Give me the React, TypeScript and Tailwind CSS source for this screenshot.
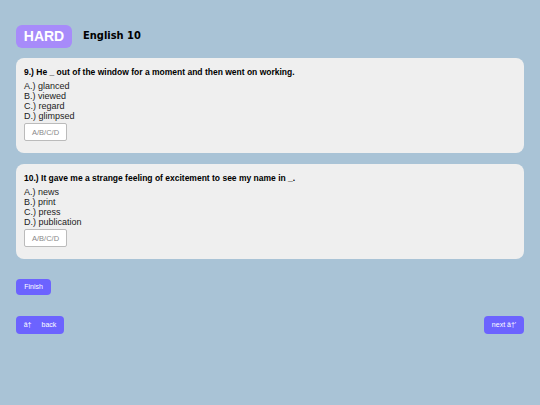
import React from "react"

const questions = [
  {
    num: 9,
    text: "He _ out of the window for a moment and then went on working.",
    options: ["glanced", "viewed", "regard", "glimpsed"],
  },
  {
    num: 10,
    text: "It gave me a strange feeling of excitement to see my name in _.",
    options: ["news", "print", "press", "publication"],
  },
]

const letters = ["A", "B", "C", "D"]

function QuestionCard({ num, text, options }: { num: number; text: string; options: string[] }) {
  return (
    <div className="bg-[#efefef] rounded-lg px-2 pt-[9px] mb-[11px] h-[95px]">
      <p className="text-[8.5px] font-bold text-black leading-[11px]">
        {num}.) {text}
      </p>
      <div className="mt-[3px] text-[9px] leading-[10px] text-[#222]">
        {options.map((o, i) => (
          <div key={i}>
            {letters[i]}.) {o}
          </div>
        ))}
      </div>
      <input
        readOnly
        placeholder="A/B/C/D"
        className="block mt-[2px] w-[43px] h-[18px] border border-[#bbb] bg-white rounded-[2px] text-[7.5px] text-center placeholder:text-[#888] outline-none"
      />
    </div>
  )
}

export default function App() {
  return (
    <div className="w-[540px] h-[405px] bg-[#a9c3d6] px-4 pt-[25px] font-['Liberation_Sans',Arial,sans-serif]">
      <div className="flex items-center gap-[11px] mb-[10px]">
        <div className="bg-[#a78bfa] text-white font-bold text-[14px] rounded-md w-[56px] h-[23px] flex items-center justify-center">
          HARD
        </div>
        <div className="font-['DejaVu_Sans_Condensed','DejaVu_Sans',sans-serif] text-[11px] text-black font-bold">English 10</div>
      </div>
      {questions.map((q) => (
        <QuestionCard key={q.num} {...q} />
      ))}
      <div className="flex mt-[20px]">
        <button className="bg-[#6c63ff] text-white text-[7px] rounded-[4px] w-[35px] h-[16px]">Finish</button>
      </div>
      <div className="flex justify-between mt-[21px]">
        <button className="bg-[#6c63ff] text-white text-[7px] rounded-[4px] w-[48px] h-[18px] flex items-center justify-center gap-[10px]">
          <span>â†</span>
          <span>back</span>
        </button>
        <button className="bg-[#6c63ff] text-white text-[7px] rounded-[4px] w-[40px] h-[18px] flex items-center justify-center">
          next â†'
        </button>
      </div>
    </div>
  )
}
